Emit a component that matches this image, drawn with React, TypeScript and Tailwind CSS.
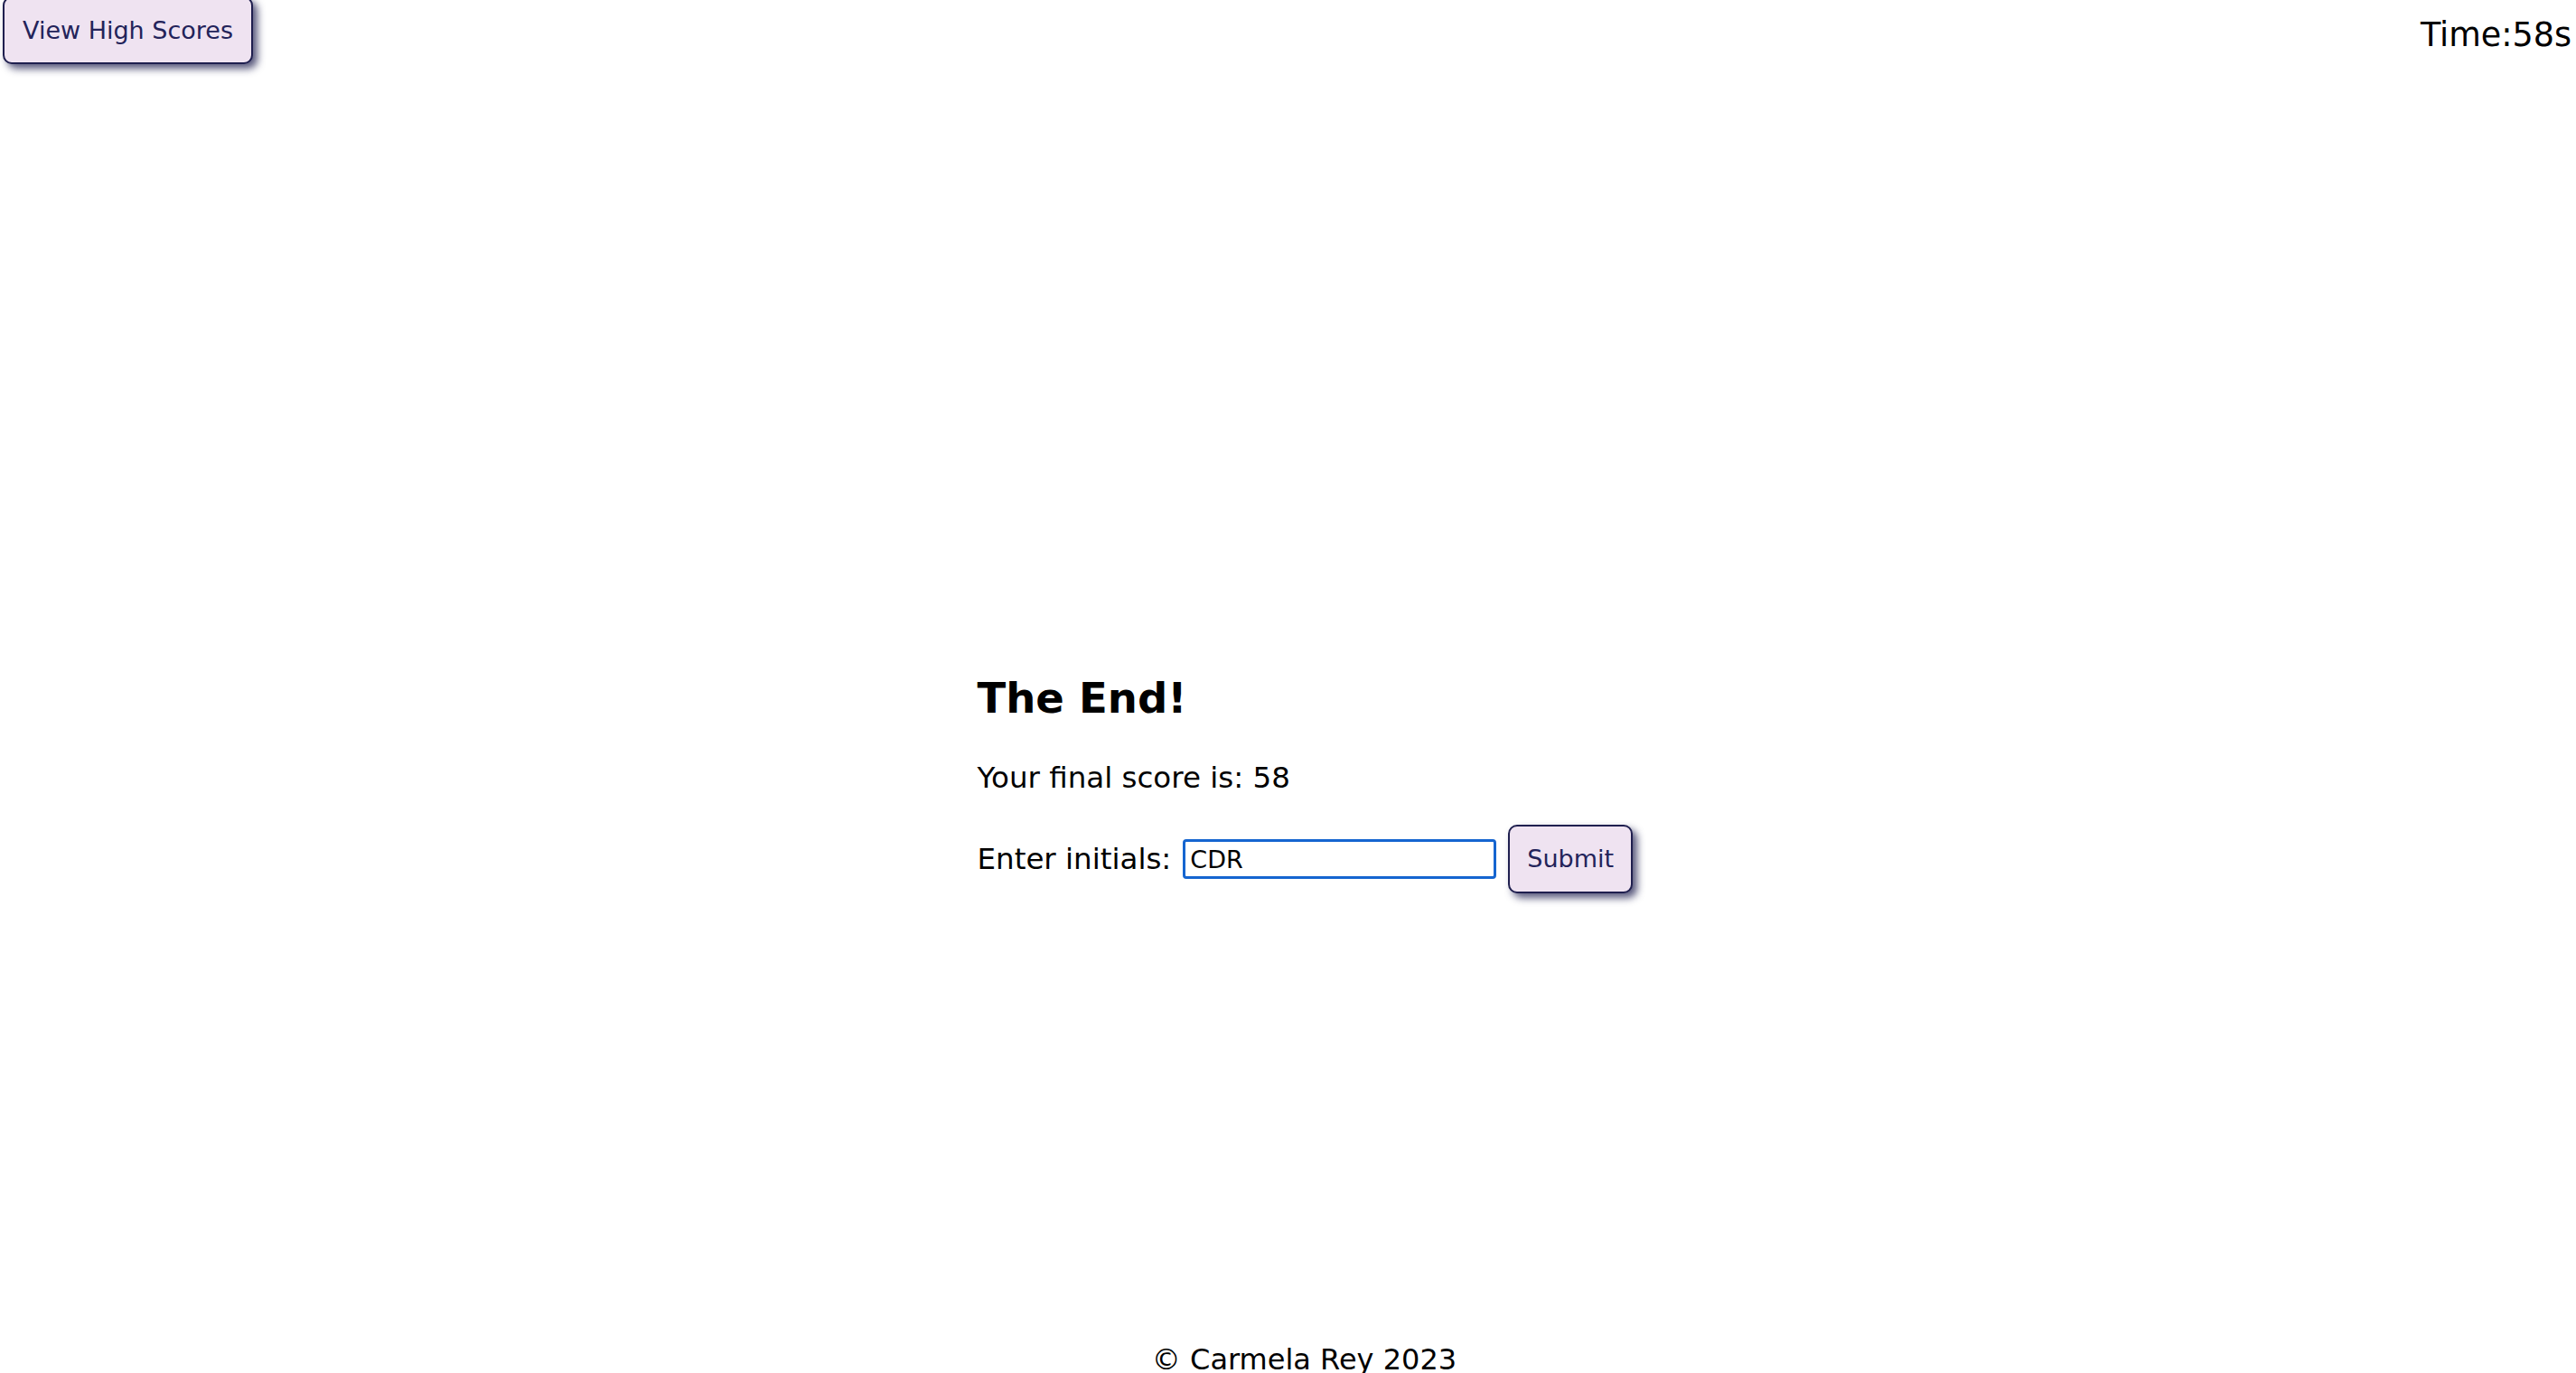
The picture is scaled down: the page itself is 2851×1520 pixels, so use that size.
import React from "react";

export default function App() {
  return (
    <div className="flex h-[1520px] flex-col overflow-hidden bg-white font-['DejaVu_Sans','Verdana',sans-serif] text-black">
      <header className="flex items-start justify-between">
        <button className="-mt-[4px] ml-[3px] rounded-[10px] border-2 border-[#1f1f4f] bg-[#efe3f1] px-[20px] py-[20px] text-[27px] leading-[31px] text-[#23235a] shadow-[5px_5px_8px_rgba(31,31,79,0.75)]">
          View High Scores
        </button>
        <div className="mr-[5px] mt-[18px] text-[36.5px] leading-[42px]">Time:58s</div>
      </header>

      <main className="flex flex-1 justify-center pl-[42px] pt-[674px]">
        <div className="w-[730px]">
          <h2 className="text-[46.5px] font-bold leading-[56px]">The End!</h2>
          <p className="mt-[42px] text-[32.5px] leading-[37px]">Your final score is: 58</p>
          <div className="mt-[33px] flex items-center">
            <label className="shrink-0 whitespace-nowrap text-[32.5px] leading-[37px]">Enter initials:</label>
            <input
              defaultValue="CDR"
              className="ml-[13px] h-[44px] w-[347px] shrink-0 rounded-[4px] border-[3px] border-[#1565d0] px-[5px] text-[27px] leading-[31px] text-black outline-none"
            />
            <button className="ml-[13px] shrink-0 rounded-[10px] border-2 border-[#1f1f4f] bg-[#efe3f1] px-[19px] py-[20px] text-[27px] leading-[32px] text-[#23235a] shadow-[5px_5px_8px_rgba(31,31,79,0.75)]">
              Submit
            </button>
          </div>
        </div>
      </main>

      <footer className="h-[33px] pl-[36px] text-center text-[32px] leading-[37px]">
        © Carmela Rey 2023
      </footer>
    </div>
  );
}
